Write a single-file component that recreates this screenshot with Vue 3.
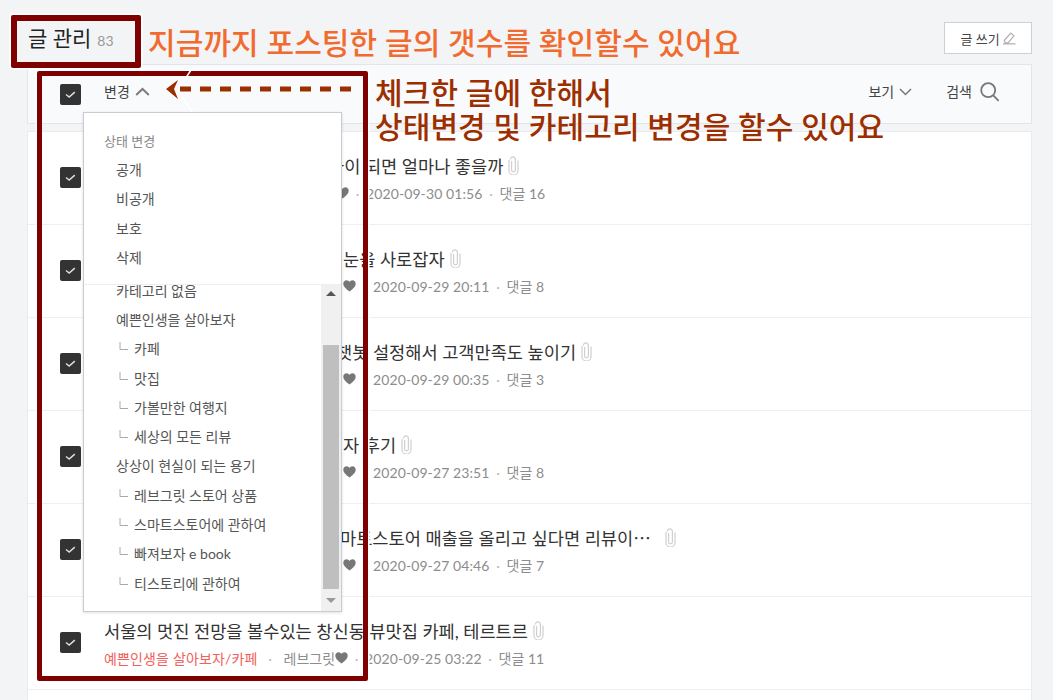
<script setup>
const rows = [
  { tw: 224, tail: '가이 되면 얼마나 좋을까', mw: 232, date: '2020-09-30 01:56', c: 16 },
  { tw: 239, tail: '눈을 사로잡자', mw: 239, date: '2020-09-29 20:11', c: 8 },
  { tw: 232, tail: '챗봇 설정해서 고객만족도 높이기', mw: 239, date: '2020-09-29 00:35', c: 3 },
  { tw: 239, tail: '자 후기', mw: 239, date: '2020-09-27 23:51', c: 8 },
  { tw: 236, tail: '마트스토어 매출을 올리고 싶다면 리뷰이⋯', mw: 239, date: '2020-09-27 04:46', c: 7, gap: 1 },
  { lead: '서울의 멋진 전망을 볼수있는 창신동', tw: 0, tail: ' 뷰맛집 카페, 테르트르', mw: 0, date: '2020-09-25 03:22', c: 11, real: 1 },
]
const states = ['공개', '비공개', '보호', '삭제']
const cats = [
  { t: '카테고리 없음' }, { t: '예쁜인생을 살아보자' },
  { t: '카페', s: 1 }, { t: '맛집', s: 1 }, { t: '가볼만한 여행지', s: 1 }, { t: '세상의 모든 리뷰', s: 1 },
  { t: '상상이 현실이 되는 용기' },
  { t: '레브그릿 스토어 상품', s: 1 }, { t: '스마트스토어에 관하여', s: 1 }, { t: '빠져보자 e book', s: 1 }, { t: '티스토리에 관하여', s: 1 },
]
</script>

<template>
  <div class="page">
    <header class="head">
      <h1 class="title">글 관리<span class="count">83</span></h1>
      <button class="write">글 쓰기
        <svg width="14" height="14" viewBox="0 0 14 14" fill="none" stroke="#b0b0b0" stroke-width="1.2"><path d="M1 12.800h12.500M2.200 9.500 8.800 2l3.200 2.800-6 7H3.200z" /></svg>
      </button>
    </header>

    <div class="toolbar">
      <span class="check"><svg width="21" height="21" viewBox="0 0 21 21"><path d="m6 10.500 3.200 2.600 5.600-5" fill="none" stroke="#ddd" stroke-width="1.500" /></svg></span>
      <span class="tool first">변경
        <svg width="15" height="9" viewBox="0 0 15 9"><path d="m1.200 8 6.300-6 6.300 6" fill="none" stroke="#7d7d7d" stroke-width="2" /></svg>
      </span>
      <span class="tool view">보기
        <svg width="13" height="8" viewBox="0 0 13 8"><path d="m1 1 5.500 5.500L12 1" fill="none" stroke="#777" stroke-width="1.500" /></svg>
      </span>
      <span class="tool search">검색
        <svg width="20" height="20" viewBox="0 0 20 20" fill="none" stroke="#777" stroke-width="1.800"><circle cx="8.200" cy="8.200" r="7" /><path d="m13.300 13.300 5.300 5.500" /></svg>
      </span>
    </div>

    <ul class="list">
      <li v-for="r in rows" :key="r.date" class="row">
        <span class="check"><svg width="21" height="21" viewBox="0 0 21 21"><path d="m6 10.500 3.200 2.600 5.600-5" fill="none" stroke="#ddd" stroke-width="1.500" /></svg></span>
        <div class="body">
          <div class="name">
            <span v-if="r.real">{{ r.lead }}</span>
            <span v-else class="lead" :style="{ width: r.tw + 'px' }"></span>
            <span>{{ r.tail }}</span>
            <svg class="clip" :class="{ far: r.gap }" width="11" height="19" viewBox="0 0 11 19" fill="none" stroke="#cfcfcf" stroke-width="1.200"><path d="M3.600 5v9a1.900 1.900 0 0 0 3.800 0V3.400a2.500 2.500 0 0 0-5 0" /><path d="M1 4v10.500a4.500 4.500 0 0 0 9 0V4.500" /></svg>
          </div>
          <div class="meta">
            <template v-if="r.real">
              <span class="cat">예쁜인생을 살아보자/카페</span><i class="dot first-dot">·</i><span>레브그릿</span>
            </template>
            <span v-else class="lead" :style="{ width: r.mw + 'px' }"></span>
            <svg class="heart" width="13" height="12" viewBox="0 0 13 12"><path d="M6.500 11.600C2.600 8.600.3 6.500.3 3.700.3 1.700 1.800.3 3.500.3c1.300 0 2.400.7 3 1.800.6-1.100 1.700-1.800 3-1.800 1.700 0 3.200 1.400 3.200 3.400 0 2.800-2.300 4.900-6.200 7.900z" fill="#777" /></svg>
            <i class="dot">·</i><span class="date">{{ r.date }}</span><i class="dot">·</i><span>댓글 {{ r.c }}</span>
          </div>
        </div>
      </li>
    </ul>

    <div class="menu">
      <div class="states">
        <p class="cap">상태 변경</p>
        <p v-for="s in states" :key="s" class="item">{{ s }}</p>
      </div>
      <div class="cats">
        <div class="scroll">
          <p v-for="(c, i) in cats" :key="c.t" class="item" :class="{ sub: c.s, top: i === 0 }">
            <svg v-if="c.s" class="branch" width="9" height="9" viewBox="0 0 9 9"><path d="M1 0v7.500h8" fill="none" stroke="#aaa" /></svg>{{ c.t }}
          </p>
        </div>
        <div class="bar"><span class="up"></span><span class="thumb"></span><span class="down"></span></div>
      </div>
    </div>

    <div class="frame one"></div>
    <div class="frame two"></div>
    <p class="note orange">지금까지 포스팅한 글의 갯수를 확인할수 있어요</p>
    <p class="note red">체크한 글에 한해서<br />상태변경 및 카테고리 변경을 할수 있어요</p>
    <svg class="arrow" width="200" height="44" viewBox="0 0 200 44">
      <path d="M28 2 15 22l14 22" fill="none" stroke="#fff" stroke-width="1.500" />
      <path d="m3 21 12-9-4 9 4 10z" fill="#9c2e00" />
      <path d="M17 21h172" stroke="#9c2e00" stroke-width="5" stroke-dasharray="11 9" />
    </svg>
  </div>
</template>

<style>
html, body { margin: 0; background: #f3f4f6; }
</style>

<style scoped>
.page {
  position: relative;
  width: 1053px;
  height: 700px;
  overflow: hidden;
  background: #f3f4f6;
  font-family: Lato, "Noto Sans CJK KR", sans-serif;
  color: #333;
}
p, ul, h1 { margin: 0; padding: 0; }
.head {
  height: 64px;
  box-sizing: border-box;
  padding: 22px 21px 0 28px;
  display: flex;
  justify-content: space-between;
  align-items: flex-start;
}
.title { font-size: 21px; font-weight: 400; line-height: 32px; color: #222; }
.count { font-size: 14px; color: #999; margin-left: 6px; }
.write {
  width: 88px;
  height: 32px;
  padding: 0;
  background: #fff;
  border: 1px solid #ccd0d4;
  font: 400 13px Lato, "Noto Sans CJK KR", sans-serif;
  color: #444;
  display: flex;
  align-items: center;
  justify-content: center;
  gap: 2px;
}
.toolbar {
  margin: 0 21px 0 27px;
  height: 60px;
  box-sizing: border-box;
  background: #f9fafc;
  border: 1px solid #e3e5ea;
  display: flex;
  align-items: center;
  padding-left: 32px;
}
.check {
  flex: none;
  width: 21px;
  height: 21px;
  border-radius: 2px;
  background: #333;
  display: block;
}
.check svg { display: block; }
.tool { display: flex; align-items: center; font-size: 14px; line-height: 18px; color: #444; gap: 5px; margin-top: -5px; }
.first { margin-left: 23px; }
.view { margin-left: auto; }
.search { margin-left: 34px; margin-right: 31px; gap: 8px; }
.list {
  list-style: none;
  margin: 7px 21px 0 27px;
  background: #fff;
  border: 1px solid #e9ebee;
  border-bottom: 0;
  padding-bottom: 30px;
}
.row {
  height: 93px;
  box-sizing: border-box;
  border-bottom: 1px solid #eeeff1;
  display: flex;
  align-items: flex-start;
  padding: 35px 0 0 32px;
}
.body { margin-left: 23px; margin-top: -15px; }
.name {
  display: flex;
  align-items: center;
  height: 26px;
  font-size: 17.600px;
  color: #333;
  white-space: pre;
}
.lead { display: inline-block; flex: none; overflow: hidden; }
.clip { margin-left: 5px; }
.clip.far { margin-left: 14px; }
.meta {
  display: flex;
  align-items: center;
  height: 22px;
  margin-top: 4px;
  font-size: 14px;
  color: #8c8c8c;
  white-space: pre;
}
.cat { color: #f1605a; letter-spacing: .15px; }
.dot { font-style: normal; color: #bbb; width: 17px; text-align: center; }
.dot.first-dot { width: 27px; margin-left: -1px; }
.date { letter-spacing: .1px; }
.menu {
  position: absolute;
  left: 83px;
  top: 112px;
  width: 259px;
  height: 500px;
  box-sizing: border-box;
  background: #fff;
  border: 1px solid #c8ccd2;
  box-shadow: 0 1px 3px rgba(0, 0, 0, .12);
  display: flex;
  flex-direction: column;
}
.states { padding: 14px 0 0; height: 172px; box-sizing: border-box; border-bottom: 1px solid #eee; flex: none; }
.cap { font-size: 13px; color: #888; line-height: 28px; padding-left: 20px; }
.item {
  height: 29.300px;
  line-height: 29.300px;
  font-size: 14px;
  color: #555;
  padding-left: 32px;
  white-space: nowrap;
}
.item.sub { padding-left: 50px; position: relative; }
.branch { position: absolute; left: 35px; top: 8px; }
.cats { flex: 1; min-height: 0; display: flex; }
.scroll { flex: 1; overflow: hidden; padding-top: 6px; }
.item.top { height: 14px; line-height: 0; }
.bar {
  flex: none;
  width: 20px;
  background: #f0f0f0;
  position: relative;
}
.thumb { position: absolute; left: 2px; right: 2px; top: 60px; height: 244px; background: #bfbfbf; }
.up, .down { position: absolute; left: 5px; border: 5px solid transparent; }
.up { top: 6px; border-top: 0; border-bottom-color: #555; }
.down { bottom: 8px; border-bottom: 0; border-top-color: #999; }
.frame {
  position: absolute;
  box-sizing: border-box;
  border: 5px solid #7f0000;
  border-radius: 2px;
  box-shadow: 0 0 0 1.500px #fff;
}
.frame.one { left: 11px; top: 15px; width: 130px; height: 53px; border-width: 6px; }
.frame.two { left: 37px; top: 71px; width: 331px; height: 610px; }
.note { position: absolute; white-space: nowrap; font-size: 30px; font-weight: 500; line-height: 34px; letter-spacing: .1px; }
.orange { left: 148px; top: 25px; color: #f26b2e; }
.red { left: 375px; top: 75px; color: #9c2e00; }
.arrow { position: absolute; left: 163px; top: 68px; }
</style>
